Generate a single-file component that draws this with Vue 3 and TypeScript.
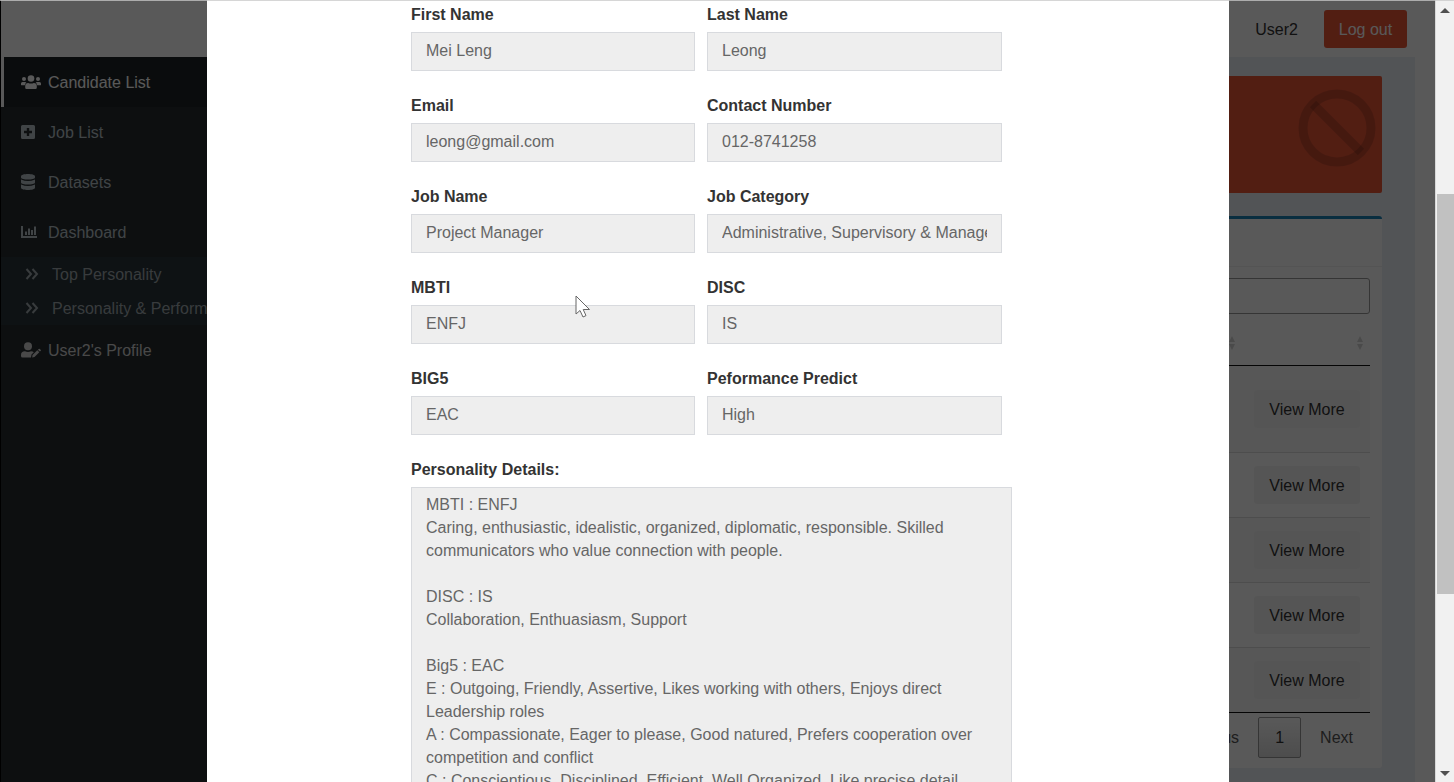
<script setup lang="ts">
import { ref } from 'vue'

interface Field {
  id: string
  label: string
  value: string
}

const fields: Field[] = [
  { id: 'first-name', label: 'First Name', value: 'Mei Leng' },
  { id: 'last-name', label: 'Last Name', value: 'Leong' },
  { id: 'email', label: 'Email', value: 'leong@gmail.com' },
  { id: 'contact', label: 'Contact Number', value: '012-8741258' },
  { id: 'job-name', label: 'Job Name', value: 'Project Manager' },
  { id: 'job-category', label: 'Job Category', value: 'Administrative, Supervisory & Management' },
  { id: 'mbti', label: 'MBTI', value: 'ENFJ' },
  { id: 'disc', label: 'DISC', value: 'IS' },
  { id: 'big5', label: 'BIG5', value: 'EAC' },
  { id: 'performance', label: 'Peformance Predict', value: 'High' },
]

const details = [
  'MBTI : ENFJ',
  'Caring, enthusiastic, idealistic, organized, diplomatic, responsible. Skilled communicators who value connection with people.',
  '',
  'DISC : IS',
  'Collaboration, Enthuasiasm, Support',
  '',
  'Big5 : EAC',
  'E : Outgoing, Friendly, Assertive, Likes working with others, Enjoys direct Leadership roles',
  'A : Compassionate, Eager to please, Good natured, Prefers cooperation over competition and conflict',
  'C : Conscientious, Disciplined, Efficient, Well Organized, Like precise detail',
].join('\n')

const rows = [1, 2, 3, 4, 5]
const search = ref('')
</script>

<template>
  <div class="screen">
    <div class="page">
      <header class="topbar">
        <span class="user">User2</span>
        <button type="button" class="logout">Log out</button>
      </header>
      <div class="body">
        <nav class="sidebar">
          <a href="#" class="item active">
            <svg width="20" height="16" viewBox="0 0 20 16">
              <circle cx="3" cy="5" r="2" /><circle cx="17" cy="5" r="2" /><circle cx="10" cy="4.500" r="3.300" />
              <path d="M0 11V9.500Q0 8 1.500 8H4Q5 8 5.300 8.500Q4 9.500 3.800 11.200H.5ZM20 11V9.500Q20 8 18.500 8H16Q15 8 14.700 8.500Q16 9.500 16.200 11.200H19.500ZM4.200 13.500V12Q4.200 9 7.200 9Q10 10 12.800 9Q15.800 9 15.800 12V13.500Q15.800 15 14.500 15H5.500Q4.200 15 4.200 13.500Z" />
            </svg>
            <span>Candidate List</span>
          </a>
          <a href="#" class="item">
            <svg width="20" height="16" viewBox="0 0 20 16">
              <path fill-rule="evenodd" d="M1.500 1H12.500Q14 1 14 2.500V13.500Q14 15 12.500 15H1.500Q0 15 0 13.500V2.500Q0 1 1.500 1ZM5.800 4V6.800H3V9.200H5.800V12H8.200V9.200H11V6.800H8.200V4Z" />
            </svg>
            <span>Job List</span>
          </a>
          <a href="#" class="item">
            <svg width="20" height="16" viewBox="0 0 20 16">
              <path d="M0 2.300C0-.7 14-.7 14 2.300V3.500C14 6.300 0 6.300 0 3.500ZM0 5.500Q7 8.500 14 5.500V8.500C14 11.300 0 11.300 0 8.500ZM0 10.500Q7 13.500 14 10.500V13.700C14 16.700 0 16.700 0 13.700Z" />
            </svg>
            <span>Datasets</span>
          </a>
          <a href="#" class="item">
            <svg width="20" height="16" viewBox="0 0 20 16">
              <path d="M0 2H2V12H16V14H0ZM4 7.500H6V11H4ZM7 4.500H9V11H7ZM10 6H12V11H10ZM13 2.500H15V11H13Z" />
            </svg>
            <span>Dashboard</span>
          </a>
          <div class="submenu">
            <a href="#" class="subitem">
              <svg width="14" height="12" viewBox="0 0 14 12"><path class="line" d="M1.500 1L6 6L1.500 11M7.500 1L12 6L7.500 11" /></svg>
              <span>Top Personality</span>
            </a>
            <a href="#" class="subitem">
              <svg width="14" height="12" viewBox="0 0 14 12"><path class="line" d="M1.500 1L6 6L1.500 11M7.500 1L12 6L7.500 11" /></svg>
              <span>Personality &amp; Performance</span>
            </a>
          </div>
          <a href="#" class="item profile">
            <svg width="20" height="16" viewBox="0 0 20 16">
              <circle cx="7" cy="4.200" r="4" />
              <path d="M0 14V13Q0 9.300 4 9.300Q7 10.600 10 9.300Q11.800 9.300 12.800 10.300L10.500 12.600L10 15.600H1.500Q0 15.600 0 14ZM11.500 13L16.300 8.300L18.300 10.200L13.500 15L11.200 15.500ZM16.900 7.700L17.800 6.900Q18.300 6.500 18.800 6.900L19.800 7.900Q20.200 8.300 19.800 8.800L18.900 9.600Z" />
            </svg>
            <span>User2's Profile</span>
          </a>
        </nav>
        <main class="content">
          <section class="banner">
            <svg width="78" height="78" viewBox="0 0 78 78">
              <circle cx="39" cy="39" r="34" /><path d="M15 15L63 63" />
            </svg>
          </section>
          <section class="box">
            <div class="box-head"></div>
            <div class="box-body">
              <input v-model="search" class="search" type="search" aria-label="Search">
              <table class="grid">
                <thead>
                  <tr>
                    <th v-for="n in 2" :key="n">
                      <svg width="8" height="14" viewBox="0 0 8 14"><path d="M4 0L7 6H1ZM1 8H7L4 14Z" /></svg>
                    </th>
                  </tr>
                </thead>
                <tbody>
                  <tr v-for="row in rows" :key="row">
                    <td></td>
                    <td><button type="button" class="more">View More</button></td>
                  </tr>
                </tbody>
              </table>
              <div class="pager">
                <button type="button">Previous</button>
                <button type="button" class="current">1</button>
                <button type="button">Next</button>
              </div>
            </div>
          </section>
        </main>
      </div>
    </div>

    <div class="overlay">
      <div class="modal" role="dialog" aria-label="Personality Details">
        <form class="form" @submit.prevent>
          <div class="fields">
            <div v-for="field in fields" :key="field.id" class="field">
              <label :for="field.id">{{ field.label }}</label>
              <input :id="field.id" type="text" :value="field.value" readonly>
            </div>
          </div>
          <div class="field">
            <label for="details">Personality Details:</label>
            <textarea id="details" rows="18" :value="details" readonly></textarea>
          </div>
        </form>
      </div>
    </div>

    <div class="scrollbar">
      <svg width="10" height="6" viewBox="0 0 10 6"><path d="M5 0L10 5H0Z" /></svg>
      <div class="track"><div class="thumb"></div></div>
      <svg width="10" height="6" viewBox="0 0 10 6"><path d="M0 0H10L5 5Z" /></svg>
    </div>
    <div class="edge"></div>
    <svg class="pointer" width="16" height="24" viewBox="0 0 16 24">
      <path d="M1 1V19L5 15.500L8 22L11 20.600L8.200 14.500H14.500Z" />
    </svg>
  </div>
</template>

<style>
body {
  margin: 0;
  overflow: hidden;
}
</style>

<style scoped>
* {
  box-sizing: border-box;
}

.screen {
  position: relative;
  display: grid;
  grid-template-columns: minmax(0, 1fr) 19px;
  grid-template-rows: minmax(0, 1fr);
  height: 100vh;
  overflow: hidden;
  font: 16px/23px "Liberation Sans", Arial, sans-serif;
  color: #333;
}

button,
input,
textarea {
  font: inherit;
  color: inherit;
}

.page {
  grid-area: 1 / 1;
  display: flex;
  flex-direction: column;
  min-width: 0;
  border-left: 1px solid #000;
  overflow: hidden;
}

.topbar {
  display: flex;
  flex: none;
  align-items: center;
  justify-content: flex-end;
  gap: 26px;
  height: 57px;
  padding: 1px 28px 0 0;
  background: #fff;
}

.logout {
  width: 83px;
  height: 38px;
  padding: 0;
  border: 0;
  border-radius: 3px;
  background: #ea5636;
  color: #fff;
}

.body {
  display: flex;
  flex: 1;
  min-height: 0;
  background: #fff;
}

.sidebar {
  flex: none;
  width: 262px;
  background: #262d30;
}

.item,
.subitem {
  display: flex;
  align-items: center;
  color: #b8c2c8;
  text-decoration: none;
  white-space: nowrap;
}

.item {
  gap: 7px;
  height: 50px;
  padding-left: 17px;
  border-left: 3px solid transparent;
}

.item.active {
  border-left-color: #fff;
  background: #1e2426;
  color: #fff;
}

.item.profile {
  color: #d0d0d0;
}

.item svg,
.subitem svg {
  flex: none;
  fill: currentColor;
}

.submenu {
  background: #28343b;
}

.subitem {
  gap: 13px;
  height: 34px;
  padding-left: 24px;
  color: #a0aaae;
}

.subitem .line {
  fill: none;
  stroke: currentColor;
  stroke-width: 2;
}

.content {
  flex: 1;
  min-width: 0;
  margin-right: 20px;
  padding: 19px 33px 0 17px;
  background: #ecf0f5;
}

.banner {
  display: flex;
  justify-content: flex-end;
  height: 117px;
  padding: 13px 6px 0 0;
  border-radius: 2px;
  background: #ea5636;
}

.banner svg {
  fill: none;
  stroke: rgba(0, 0, 0, 0.15);
  stroke-width: 9;
}

.box {
  margin-top: 23px;
  border-top: 3px solid #1c84b8;
  border-radius: 3px;
  background: #fff;
}

.box-head {
  height: 48px;
  border-bottom: 1px solid #f0f0f0;
}

.box-body {
  display: flex;
  flex-direction: column;
  padding: 11px 12px 10px;
}

.search {
  align-self: flex-end;
  width: 230px;
  height: 36px;
  border: 1px solid #999;
  border-radius: 3px;
  background: transparent;
}

.grid {
  width: 100%;
  margin-top: 5px;
  border-bottom: 1px solid #111;
  border-spacing: 0;
}

.grid th {
  height: 47px;
  padding: 0 6px 0 0;
  border-bottom: 1px solid #111;
  text-align: right;
}

.grid th svg {
  fill: #d4d4d4;
  vertical-align: middle;
}

.grid td {
  height: 65px;
  padding: 0 10px;
  border-top: 1px solid #ddd;
  text-align: right;
}

.grid td:last-child,
.grid th:last-child {
  width: 128px;
}

.grid tbody tr:first-child td {
  height: 86px;
  border-top: 0;
}

.grid tbody tr:nth-child(odd) td {
  background: #fafafa;
}

.more {
  width: 106px;
  height: 38px;
  padding: 0;
  border: 0;
  border-radius: 3px;
  background: #f4f4f4;
}

.pager {
  display: flex;
  justify-content: flex-end;
  padding-top: 4px;
}

.pager button {
  height: 41px;
  padding: 0 16px;
  border: 1px solid transparent;
  border-radius: 2px;
  background: none;
  color: #555;
}

.pager .current {
  width: 43px;
  margin: 0 2px;
  border-color: #979797;
  background: linear-gradient(#fff, #dcdcdc);
  color: #333;
}

.overlay {
  z-index: 1;
  grid-area: 1 / 1;
  min-width: 0;
  padding: 0 206px 0 207px;
  background: rgba(0, 0, 0, 0.65);
  overflow: hidden;
}

.modal {
  min-height: 100%;
  padding: 3px 217px 30px 204px;
  background: #fff;
}

.fields {
  display: grid;
  grid-template-columns: minmax(0, 284fr) minmax(0, 295fr);
  column-gap: 12px;
  margin-right: 10px;
}

.field {
  display: flex;
  flex-direction: column;
  gap: 6px;
  margin-bottom: 23px;
}

.field label {
  font-weight: 700;
}

.field input,
.field textarea {
  width: 100%;
  margin: 0;
  border: 1px solid #d8dade;
  border-radius: 0;
  background: #eee;
  color: #666;
  outline: 0;
}

.field input {
  height: 39px;
  padding: 0 14px 2px;
}

.field textarea {
  display: block;
  padding: 5px 14px;
  overflow: hidden;
  resize: none;
}

.scrollbar {
  grid-area: 1 / 2;
  display: flex;
  flex-direction: column;
  align-items: center;
  gap: 6px;
  padding: 8px 0 5px;
  border-left: 1px solid #d8d8d8;
  background: #f1f1f1;
}

.scrollbar svg {
  flex: none;
  fill: #505050;
}

.track {
  display: flex;
  flex: 1;
  flex-direction: column;
  align-items: center;
  width: 100%;
}

.track::before {
  content: "";
  flex: 174;
}

.track::after {
  content: "";
  flex: 171;
}

.thumb {
  flex: 400;
  width: 17px;
  background: #c1c1c1;
}

.edge {
  position: absolute;
  z-index: 2;
  top: 0;
  right: 0;
  left: 0;
  height: 1px;
  background: rgba(200, 200, 200, 0.75);
}

.pointer {
  position: absolute;
  z-index: 3;
  top: 295px;
  left: 575px;
  fill: #fff;
  stroke: #666;
  stroke-width: 1;
}
</style>
